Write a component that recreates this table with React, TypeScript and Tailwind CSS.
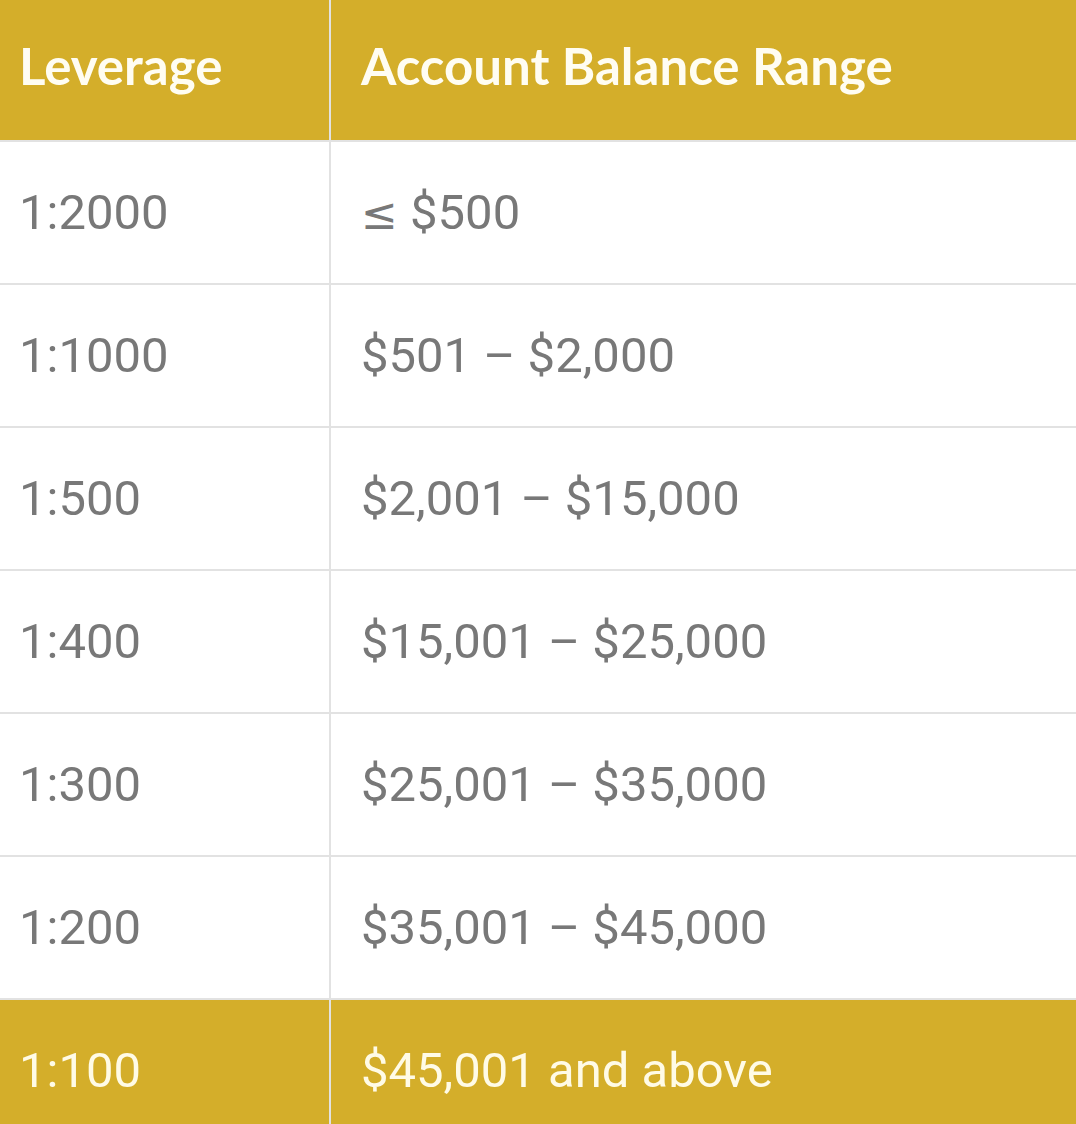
const rows: [string, React.ReactNode][] = [
  ['1:2000', <><span style={{ fontFamily: '"DejaVu Sans", sans-serif' }} className="text-[44px]">≤</span> $500</>],
  ['1:1000', '$501 – $2,000'],
  ['1:500', '$2,001 – $15,000'],
  ['1:400', '$15,001 – $25,000'],
  ['1:300', '$25,001 – $35,000'],
  ['1:200', '$35,001 – $45,000'],
];

export default function App() {
  return (
    <div className="w-[1076px] h-[1124px] overflow-hidden bg-white">
      <table className="w-full border-collapse table-fixed" style={{ fontFamily: 'Roboto, sans-serif' }}>
        <colgroup>
          <col className="w-[330px]" />
          <col />
        </colgroup>
        <thead>
          <tr className="bg-[#d4ae2a] h-[141px]">
            <th className="border-r-2 border-b-2 border-[#e2e2e2] text-left pl-[19px] pb-[8px] text-[51px] font-bold text-[#fffdf2]" style={{ fontFamily: 'Lato, sans-serif' }}>
              Leverage
            </th>
            <th className="border-b-2 border-[#e2e2e2] text-left pl-[30px] pb-[8px] text-[51px] font-bold text-[#fffdf2]" style={{ fontFamily: 'Lato, sans-serif' }}>
              Account Balance Range
            </th>
          </tr>
        </thead>
        <tbody>
          {rows.map(([lev, range]) => (
            <tr key={lev} className="h-[143px]">
              <td className="border-r-2 border-b-2 border-[#e2e2e2] pl-[19px] text-[49px] text-[#787878]">{lev}</td>
              <td className="border-b-2 border-[#e2e2e2] pl-[30px] text-[49px] text-[#787878]">{range}</td>
            </tr>
          ))}
          <tr className="bg-[#d4ae2a] h-[143px]">
            <td className="border-r-2 border-[#e2e2e2] pl-[19px] text-[49px] text-[#fffbe6]">1:100</td>
            <td className="pl-[30px] text-[49px] text-[#fffbe6]">$45,001 and above</td>
          </tr>
        </tbody>
      </table>
    </div>
  );
}
